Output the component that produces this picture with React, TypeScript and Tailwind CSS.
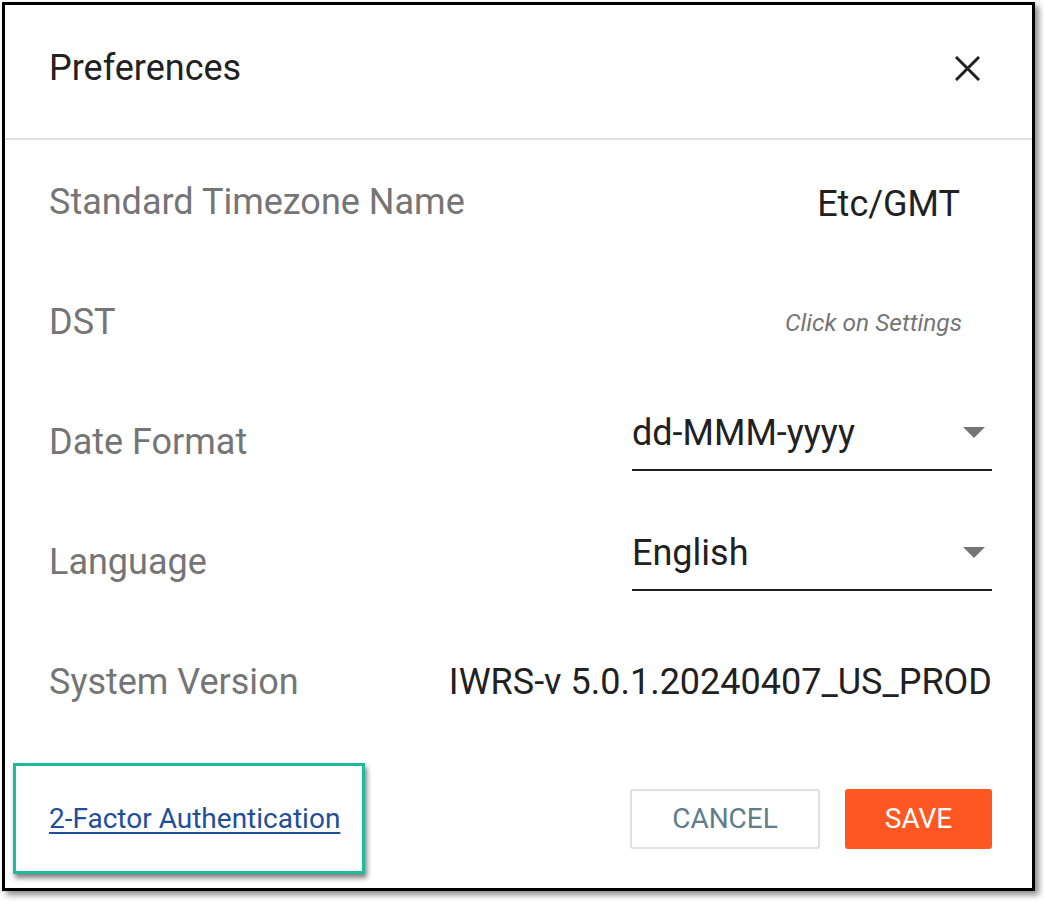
import React from "react";

function Caret() {
  return (
    <svg width="22" height="11" viewBox="0 0 22 11" className="shrink-0">
      <path d="M0 0 L22 0 L11 11 Z" fill="#757575" />
    </svg>
  );
}

function CloseIcon() {
  return (
    <svg width="25" height="25" viewBox="0 0 25 25">
      <path d="M2 2 L23 23 M23 2 L2 23" stroke="#212121" strokeWidth="3" strokeLinecap="square" />
    </svg>
  );
}

function Row({ label, children }: { label: string; children: React.ReactNode }) {
  return (
    <div className="flex h-[120px] items-center justify-between pl-[44px] pr-[40px] pt-[3px]">
      <span className="text-[36px] text-[#757575] leading-none">{label}</span>
      {children}
    </div>
  );
}

function Select({ value }: { value: string }) {
  return (
    <div className="flex h-[58px] w-[360px] items-start justify-between border-b-2 border-[#212121] pr-[7px] mt-[0px]">
      <span className="text-[36px] leading-[40px] text-[#212121]">{value}</span>
      <div className="flex h-[40px] items-center">
        <Caret />
      </div>
    </div>
  );
}

export default function App() {
  return (
    <div
      className="relative h-[902px] w-[1044px] bg-white pl-[2px] pt-[2px]"
      style={{ fontFamily: "Roboto, 'Noto Sans', sans-serif" }}
    >
      <div className="flex h-[889px] w-[1033px] flex-col border-[3px] border-black bg-white shadow-[4px_4px_6px_rgba(0,0,0,0.45)]">
        <div className="flex h-[135px] shrink-0 items-center justify-between border-b-2 border-[#e0e0e0] pl-[44px] pr-[52px]">
          <span className="text-[36px] leading-none text-[#212121] mt-[-8px]">Preferences</span>
          <div className="mt-[-6px]">
            <CloseIcon />
          </div>
        </div>
        <Row label="Standard Timezone Name">
          <span className="mr-[32px] mt-[4px] text-[36px] leading-none text-[#212121]">Etc/GMT</span>
        </Row>
        <Row label="DST">
          <span className="mr-[30px] mt-[4px] text-[24.5px] italic leading-none text-[#757575]">Click on Settings</span>
        </Row>
        <Row label="Date Format">
          <Select value="dd-MMM-yyyy" />
        </Row>
        <Row label="Language">
          <Select value="English" />
        </Row>
        <Row label="System Version">
          <span className="text-[36px] leading-none text-[#212121]">IWRS-v 5.0.1.20240407_US_PROD</span>
        </Row>
        <div className="flex flex-1 items-center justify-between pr-[40px] pt-[9px]">
          <div className="ml-[8px] flex h-[111px] w-[352px] items-center border-[3px] border-[#1dbb9c] pl-[33px] shadow-[2px_4px_5px_rgba(0,0,0,0.5)]">
            <a href="#" className="text-[28px] leading-none text-[#1f4e9c] underline underline-offset-[4px]">
              2-Factor Authentication
            </a>
          </div>
          <div className="flex items-center gap-[25px]">
            <button className="flex h-[60px] w-[190px] items-center justify-center rounded-[3px] border-2 border-[#e0e0e0] bg-white text-[28px] text-[#607d8b]">
              CANCEL
            </button>
            <button className="flex h-[60px] w-[147px] items-center justify-center rounded-[3px] bg-[#ff5722] text-[28px] text-white">
              SAVE
            </button>
          </div>
        </div>
      </div>
    </div>
  );
}
